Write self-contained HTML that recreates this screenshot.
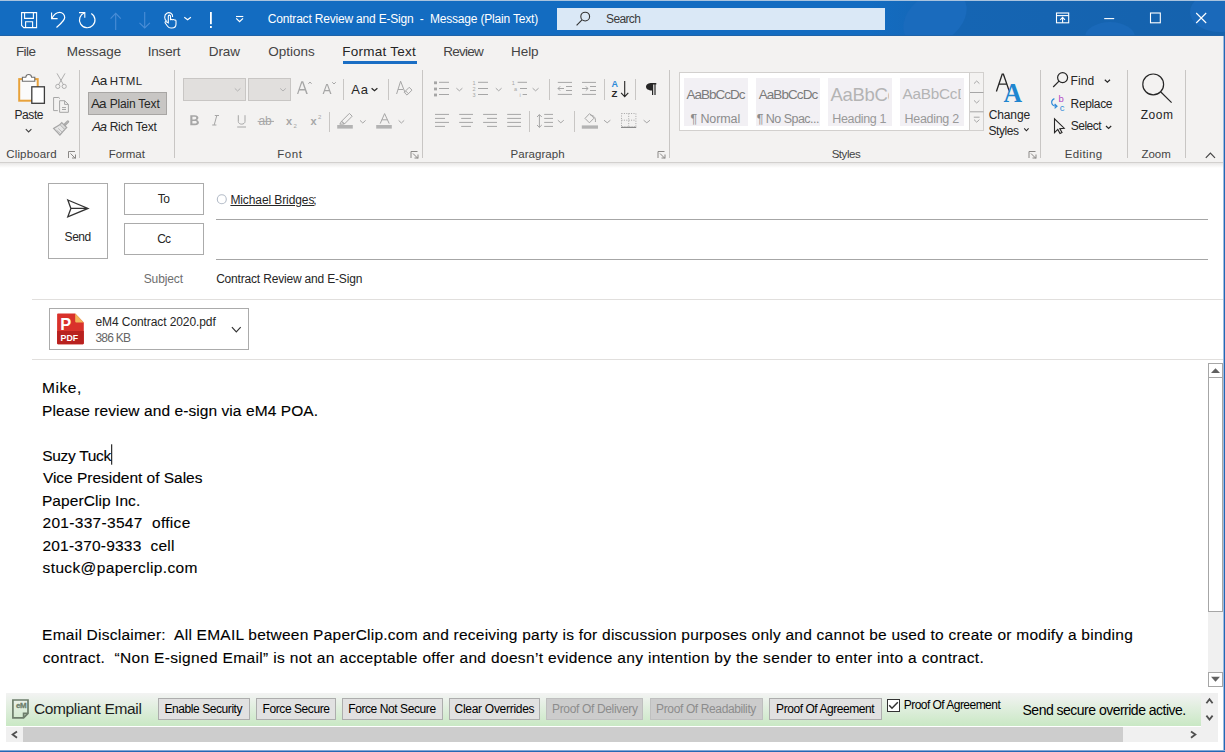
<!DOCTYPE html>
<html><head><meta charset="utf-8"><title>Contract Review and E-Sign - Message (Plain Text)</title>
<style>
html,body{margin:0;padding:0}
body{width:1225px;height:752px;overflow:hidden;position:relative;background:#fff;font-family:"Liberation Sans",sans-serif}
.t{position:absolute;white-space:pre;line-height:normal;font-family:"Liberation Sans",sans-serif}
.b{position:absolute;box-sizing:border-box}
.ic{position:absolute;left:0;top:0}

</style></head><body>
<div class="b" style="left:0;top:0;width:1225px;height:36px;background:linear-gradient(90deg,#136cc1 0px,#136cc1 870px,#1565b3 960px,#1562ad 1225px)"></div>
<div class="b" style="left:905px;top:-10px;width:60px;height:56px;border-radius:50%;background:#1a6bbd;transform:skewX(-20deg)"></div>
<div class="b" style="left:1085px;top:22px;width:50px;height:30px;border-radius:50%;background:#1a69b9"></div>
<div class="b" style="left:1190px;top:-8px;width:60px;height:40px;border-radius:50%;background:#1a69ba"></div>
<div class="b" style="left:0;top:0;width:1225px;height:1px;background:#a9c3de"></div>
<div class="b" style="left:0;top:35px;width:1225px;height:1px;background:#1f63a8"></div>
<div class="b" style="left:557px;top:8px;width:328px;height:22px;background:#dae8f6"></div>
<div class="b" style="left:0;top:36px;width:1225px;height:126px;background:#f3f2f1"></div>
<div class="b" style="left:0;top:162px;width:1225px;height:1px;background:#d2d0ce"></div>
<div class="b" style="left:0;top:163px;width:1225px;height:5px;background:linear-gradient(#e9e8e7,#fff)"></div>
<div class="b" style="left:343px;top:61px;width:74px;height:3px;background:#1a6ec4"></div>
<!-- format plain text highlight -->
<div class="b" style="left:88px;top:92px;width:79px;height:23px;background:#c8c6c4;border:1px solid #a8a6a4"></div>
<!-- font boxes -->
<div class="b" style="left:183px;top:78px;width:63px;height:23px;background:#e1dfdd;border:1px solid #c8c6c4"></div>
<div class="b" style="left:248px;top:78px;width:43px;height:23px;background:#e1dfdd;border:1px solid #c8c6c4"></div>
<!-- styles gallery -->
<div class="b" style="left:679px;top:72px;width:305px;height:59px;background:#fff;border:1px solid #d2d0ce"></div>
<div class="b" style="left:684px;top:78px;width:64px;height:48px;background:#f2f0f4"></div>
<div class="b" style="left:756px;top:78px;width:64px;height:48px;background:#f2f0f4"></div>
<div class="b" style="left:828px;top:78px;width:64px;height:48px;background:#f2f0f4"></div>
<div class="b" style="left:900px;top:78px;width:64px;height:48px;background:#f2f0f4"></div>
<div class="b" style="left:969px;top:72px;width:15px;height:59px;border:1px solid #d2d0ce;background:#f3f2f1"></div>
<!-- compose -->
<div class="b" style="left:48px;top:183px;width:60px;height:76px;border:1px solid #ababab"></div>
<div class="b" style="left:124px;top:183px;width:80px;height:32px;border:1px solid #ababab"></div>
<div class="b" style="left:124px;top:223px;width:80px;height:32px;border:1px solid #ababab"></div>
<div class="b" style="left:216px;top:219px;width:992px;height:1px;background:#a6a6a6"></div>
<div class="b" style="left:216px;top:259px;width:992px;height:1px;background:#a6a6a6"></div>
<div class="b" style="left:32px;top:299px;width:1191px;height:1px;background:#e1dfdd"></div>
<div class="b" style="left:49px;top:308px;width:200px;height:42px;border:1px solid #ababab"></div>
<div class="b" style="left:32px;top:359px;width:1191px;height:1px;background:#e1dfdd"></div>
<!-- window border right -->
<div class="b" style="left:1223px;top:36px;width:1px;height:716px;background:#9dbbe0"></div>
<div class="b" style="left:1224px;top:36px;width:1px;height:716px;background:#2467b4"></div>
<div class="b" style="left:0;top:750px;width:1225px;height:1px;background:#7fa6d6"></div>
<div class="b" style="left:0;top:751px;width:1225px;height:1px;background:#2467b4"></div>
<!-- vertical scrollbar -->
<div class="b" style="left:1208px;top:363px;width:15px;height:324px;background:#f0f0f0"></div>
<div class="b" style="left:1208px;top:363px;width:15px;height:15px;border:1px solid #a6a6a6;background:#fff"></div>
<div class="b" style="left:1208px;top:377px;width:15px;height:235px;border:1px solid #a6a6a6;background:#fff"></div>
<div class="b" style="left:1208px;top:672px;width:15px;height:15px;border:1px solid #a6a6a6;background:#fff"></div>
<!-- status bar -->
<div class="b" style="left:6px;top:693px;width:1195px;height:33px;background:linear-gradient(#f3f3f3,#c9e8c4)"></div>
<div class="b" style="left:1201px;top:693px;width:17px;height:49px;background:#f0f0f0"></div>
<div class="b" style="left:6px;top:727px;width:1212px;height:15px;background:#f0f0f0"></div>
<div class="b" style="left:23px;top:727px;width:1100px;height:15px;background:#cdcdcd"></div>
<!-- buttons -->
<div class="b" style="left:158px;top:698px;width:92px;height:22px;background:#e1e1e1;border:1px solid #adadad"></div>
<div class="b" style="left:256px;top:698px;width:80px;height:22px;background:#e1e1e1;border:1px solid #adadad"></div>
<div class="b" style="left:342px;top:698px;width:101px;height:22px;background:#e1e1e1;border:1px solid #adadad"></div>
<div class="b" style="left:449px;top:698px;width:91px;height:22px;background:#e1e1e1;border:1px solid #adadad"></div>
<div class="b" style="left:546px;top:698px;width:97px;height:22px;background:#cccccc;border:1px solid #bfbfbf"></div>
<div class="b" style="left:650px;top:698px;width:113px;height:22px;background:#cccccc;border:1px solid #bfbfbf"></div>
<div class="b" style="left:769px;top:698px;width:113px;height:22px;background:#e1e1e1;border:1px solid #adadad"></div>
<div class="b" style="left:887px;top:699px;width:13px;height:13px;background:#fff;border:1px solid #333"></div>
<!-- heading previews -->
<div class="b" style="left:828px;top:78px;width:61px;height:30px;overflow:hidden"><div class="t" style="left:2.4px;top:6px;font-size:18.5px;letter-spacing:-0.3px;color:#b4b4b4">AaBbCc</div></div>
<div class="b" style="left:900px;top:78px;width:61px;height:30px;overflow:hidden"><div class="t" style="left:2.4px;top:7px;font-size:15.3px;letter-spacing:-0.2px;color:#b4b4b4">AaBbCcD</div></div>
<!-- font box chevrons -->

<svg class="ic" width="1225" height="752" viewBox="0 0 1225 752">
<g fill="none" stroke="#ffffff" stroke-width="1.1">
<!-- save -->
<path d="M21.6 12.6 H36.6 V27.6 H23.8 L21.6 25.4 Z"/>
<path d="M24.6 12.6 V18.4 H33.4 V12.6"/>
<path d="M25.6 27.6 V21.8 H32.6 V27.6"/>
<!-- undo -->
<path d="M51.6 12.4 V18.6 H57.6"/>
<path d="M51.9 18.2 C54 14.5 57 12.4 59.7 12.4 A5 5 0 0 1 64.7 17.4 C64.7 19.5 63.5 21 56.5 27.5" stroke-width="1.2"/>
<!-- redo -->
<path d="M91.3 13.4 A7.75 7.75 0 1 1 84.6 12.7" stroke-width="1.2"/>
<path d="M79 12.6 H84.8 V17.8"/>
</g>
<g fill="none" stroke="#4a8dd6" stroke-width="1.1">
<path d="M115.7 13.6 V30"/><path d="M110.6 18.6 L115.7 13.4 L120.8 18.6"/>
<path d="M144.7 12 V28"/><path d="M139.5 22.8 L144.7 28 L149.9 22.8"/>
</g>
<g fill="none" stroke="#ffffff" stroke-width="1.1">
<!-- touch hand -->
<path d="M166.5 21 C164.3 19.5 163.8 15 166.8 13.2 C169.8 11.6 173 13.8 172.6 17"/>
<path d="M168.3 22.8 V16.3 C168.3 14.7 170.5 14.7 170.5 16.3 V20.3 C170.5 19 172.6 19 172.6 20.3 C172.6 19.2 174.6 19.3 174.6 20.6 C174.6 19.8 176 20 176 21 V24 C176 26.5 174.5 28 172 28 H171 C169.5 28 168.5 27.5 167.6 26.2 L165.2 23 C164.6 22 165.8 21.2 166.8 22 Z"/>
<path d="M184.3 17.2 L187.6 19.8 L190.9 17.2"/>
<!-- customize -->
<path d="M236 16.5 H243.3"/><path d="M236.2 18.4 L239.6 21.6 L243 18.4" stroke-width="1.3"/>
</g>
<rect x="210" y="12" width="1.8" height="12.2" fill="#fff"/>
<rect x="210" y="26" width="1.8" height="2" fill="#fff"/>
<!-- search icon -->
<g fill="none" stroke="#333" stroke-width="1.1">
<circle cx="585.2" cy="16.6" r="4.4"/>
<path d="M582 19.9 L576.6 25.4"/>
</g>
<!-- window controls -->
<g fill="none" stroke="#fff" stroke-width="1.1">
<rect x="1056.5" y="13" width="12.2" height="9.8"/>
<path d="M1056.5 15.6 H1068.7"/>
<path d="M1062.6 22.8 V17.6 M1060.2 19.8 L1062.6 17.4 L1065 19.8"/>
<path d="M1104.2 18.6 H1114.2"/>
<rect x="1150.5" y="13" width="9.8" height="9.8"/>
<path d="M1196.2 13 L1206.2 23 M1206.2 13 L1196.2 23"/>
</g>
<!-- separators -->
<g fill="#c8c6c4">
<rect x="79" y="70" width="1" height="88"/>
<rect x="174" y="70" width="1" height="88"/>
<rect x="422" y="70" width="1" height="88"/>
<rect x="669" y="70" width="1" height="88"/>
<rect x="1040" y="70" width="1" height="88"/>
<rect x="1127" y="70" width="1" height="88"/>
<rect x="1185" y="70" width="1" height="88"/>
<rect x="343" y="79" width="1" height="21"/>
<rect x="388" y="79" width="1" height="21"/>
<rect x="329" y="112" width="1" height="20"/>
<rect x="549" y="79" width="1" height="21"/>
<rect x="604" y="79" width="1" height="21"/>
<rect x="635" y="79" width="1" height="21"/>
<rect x="529" y="111" width="1" height="21"/>
<rect x="574" y="111" width="1" height="21"/>
</g>
<!-- paste -->
<rect x="19.2" y="79.1" width="18.5" height="21.6" fill="#fbfbfb" stroke="#e8a23a" stroke-width="2"/>
<path d="M22.4 81.2 V77.2 H25.8 C26.2 73.6 31.2 73.6 31.6 77.2 H34.8 V81.2 Z" fill="#fff" stroke="#6e6e6e" stroke-width="1.1"/>
<rect x="31.8" y="86.8" width="12.6" height="16.5" fill="#fff" stroke="#3c3c3c" stroke-width="1.3"/>
<path d="M25.8 129.2 L28.6 132 L31.4 129.2" fill="none" stroke="#444" stroke-width="1.1"/>
<!-- cut/copy/painter (disabled) -->
<g fill="none" stroke="#a6a6a6" stroke-width="1">
<path d="M57 73.4 L63.4 84.6 M65 73.4 L58.6 84.6" stroke-width="0.9"/>
<circle cx="57.8" cy="86.4" r="2.1" stroke-width="0.9"/><circle cx="64.2" cy="86.4" r="2.1" stroke-width="0.9"/>
<path d="M57.8 110.6 H53.6 V97.5 H58.8 L60 98.7"/>
<path d="M59.6 100.7 H64.6 L68.4 104.4 V112.3 H59.6 Z M64.6 100.7 V104.4 H68.4"/>
<path d="M62 107.6 H66 M62 109.5 H66"/>
<path d="M63.8 124.7 L67.4 121.1 C68 120.5 69 121.5 68.4 122.1 L64.8 125.7" stroke-width="1.3"/>
<path d="M61.8 122.7 L66.7 127.6 L64.6 129.7 L59.7 124.8 Z" fill="#dcdcdc" stroke-width="1.2"/>
<path d="M59.7 124.8 L53.6 128.4 L59.9 135.2 L64.6 129.7" fill="#e6e6e6" stroke-width="1.2"/>
<path d="M56.6 130.2 L60.6 133.6 M58.2 128.4 L62.4 132.4" stroke-width="0.7"/>
</g>
<!-- font group -->
<g fill="#a6a6a6">
<path d="M297 94 L301.3 81.2 H303.2 L307.8 94 H306.2 L305 90.4 H299.4 L298.3 94 Z M299.9 89 H304.5 L302.2 82.6 Z"/>
<path d="M322.6 94 L326.2 84 H327.8 L331.5 94 H330.1 L329.2 91.3 H324.8 L323.9 94 Z M325.2 90 H328.8 L327 84.9 Z"/>
</g>
<g fill="none" stroke="#a6a6a6" stroke-width="1">
<path d="M308.4 83.8 L310 82 L311.6 83.8"/>
<path d="M332.2 82.2 L334 84 L335.8 82.2"/>
</g>
<path d="M371.6 88.2 L374.5 90.8 L377.4 88.2" fill="none" stroke="#262626" stroke-width="1.2"/>
<g fill="none" stroke="#a6a6a6" stroke-width="1">
<path d="M396.6 94 L400.6 81.2 L405 92.5"/>
<path d="M398 89.5 H403"/>
<path d="M404.2 92.3 L409.2 87.3 L412 90.1 L407 95.1 Z M405.6 90.9 L408.4 93.7"/>
</g>
<!-- B I U ab x2 x2 -->
<g fill="#a6a6a6">
<path d="M190.3 115.2 H194.6 C197.6 115.2 198.4 116.8 198.4 117.8 C198.4 119 197.6 119.8 196.6 120.1 C198 120.4 198.9 121.4 198.9 122.6 C198.9 124 198 125.2 195 125.2 H190.3 Z M192.4 116.8 V119.4 H194.4 C195.6 119.4 196.3 118.9 196.3 118.1 C196.3 117.3 195.7 116.8 194.4 116.8 Z M192.4 121 V123.6 H194.8 C196.1 123.6 196.8 123.1 196.8 122.3 C196.8 121.5 196.1 121 194.8 121 Z"/>
</g>
<g fill="none" stroke="#a6a6a6" stroke-width="1">
<path d="M216.8 115.5 L214.2 125 M214.8 115.5 H219 M212.2 125 H216.4"/>
<path d="M238.3 115.2 V121.5 C238.3 125 245 125 245 121.5 V115.2"/>
<path d="M237.2 127 H246"/>
<path d="M257.6 121.4 H274"/>
</g>
<text x="258.6" y="125" font-family="Liberation Sans" font-size="12" fill="#a6a6a6" letter-spacing="-0.3">ab</text>
<text x="286" y="125" font-family="Liberation Sans" font-size="11" font-weight="bold" fill="#a6a6a6">x</text>
<text x="293.6" y="127.6" font-family="Liberation Sans" font-size="6" fill="#a6a6a6">2</text>
<text x="310.6" y="125" font-family="Liberation Sans" font-size="11" font-weight="bold" fill="#a6a6a6">x</text>
<text x="318" y="118.6" font-family="Liberation Sans" font-size="6" fill="#a6a6a6">2</text>
<!-- highlighter / font color -->
<g fill="none" stroke="#a6a6a6" stroke-width="1">
<path d="M341.6 121.2 L349.4 113.4 L352.2 116.2 L344.4 124 Z M339.8 124.2 L341.6 121.2 L344.4 124 Z"/>
<path d="M360 120.4 L362.8 123 L365.6 120.4"/>
<path d="M380.2 123.6 L384.6 113.6 L389.2 123.6 M381.8 119.8 H387.4"/>
<path d="M398.6 120.4 L401.4 123 L404.2 120.4"/>
</g>
<rect x="337.2" y="125" width="15.6" height="3.6" fill="#b3b3b3"/>
<rect x="376.2" y="125" width="15.6" height="3.6" fill="#b3b3b3"/>
<g fill="none" stroke="#b3b3b3" stroke-width="1">
<path d="M234.8 88.4 L237.6 91 L240.4 88.4"/>
<path d="M280.2 88.4 L283 91 L285.8 88.4"/>
</g>
<!-- paragraph icons -->
<g fill="#a6a6a6">
<rect x="434" y="81.4" width="3" height="2.8"/><rect x="434" y="87.6" width="3" height="2.8"/><rect x="434" y="93.6" width="3" height="2.8"/>
<rect x="439" y="81.8" width="10" height="1"/><rect x="439" y="88" width="10" height="1"/><rect x="439" y="94" width="10" height="1"/>
<rect x="478" y="81.8" width="10" height="1"/><rect x="478" y="88" width="10" height="1"/><rect x="478" y="94" width="10" height="1"/>
<rect x="517.6" y="81.8" width="9.4" height="1"/><rect x="520" y="88" width="7" height="1"/><rect x="522.6" y="94" width="4.4" height="1"/>
</g>
<g font-family="Liberation Sans" font-size="5.5" fill="#a6a6a6">
<text x="472.6" y="85">1</text><text x="472.4" y="91.2">2</text><text x="472.4" y="97.2">3</text>
<text x="511.8" y="85">1</text><text x="514" y="91.2">a</text><text x="519.4" y="97.2">i</text>
</g>
<g fill="none" stroke="#a6a6a6" stroke-width="1">
<path d="M456.4 88.2 L459.4 90.8 L462.4 88.2"/>
<path d="M495.8 88.2 L498.7 90.8 L501.6 88.2"/>
<path d="M532.6 88.2 L535.6 90.8 L538.6 88.2"/>
<!-- indent -->
<path d="M557.8 82.4 H572 M566 86.5 H572 M566 90.5 H572 M557.8 94.4 H572"/>
<path d="M558 88.5 H564 M560.2 86.3 L558 88.5 L560.2 90.7"/>
<path d="M582 82.4 H596 M590 86.5 H596 M590 90.5 H596 M582 94.4 H596"/>
<path d="M582 88.5 H588 M585.8 86.3 L588 88.5 L585.8 90.7"/>
<!-- align -->
<path d="M435 114.4 H449 M435 118.4 H445 M435 122.4 H449 M435 126.4 H445"/>
<path d="M459.2 114.4 H473 M461.2 118.4 H471 M459.2 122.4 H473 M461.2 126.4 H471"/>
<path d="M483.1 114.4 H497 M487 118.4 H497 M483.1 122.4 H497 M487 126.4 H497"/>
<path d="M507.2 114.4 H521 M507.2 118.4 H521 M507.2 122.4 H521 M507.2 126.4 H521"/>
<!-- line spacing -->
<path d="M539.4 114.6 V127.4 M537 117 L539.4 114.6 L541.8 117 M537 125 L539.4 127.4 L541.8 125"/>
<path d="M544.2 114.4 H553 M544.2 118.4 H553 M544.2 122.4 H553 M544.2 126.4 H553"/>
<path d="M557.8 120.2 L560.8 122.8 L563.8 120.2"/>
<!-- shading -->
<path d="M589.6 113.6 L585 118.4 L589.4 122.8 L594 118.2 Z M590.2 115 C593 115 596 117 595.4 122"/>
<path d="M604 120.2 L607.2 122.8 L610.4 120.2"/>
<path d="M643.6 120.2 L646.8 122.8 L650 120.2"/>
</g>
<rect x="581.8" y="125.4" width="16.2" height="3.3" fill="#b3b3b3"/>
<!-- borders -->
<g fill="none" stroke="#a6a6a6" stroke-width="1" stroke-dasharray="1 1.4">
<rect x="621.5" y="113.5" width="14.4" height="13.5"/>
<path d="M628.7 113.5 V127 M621.5 120.2 H635.9"/>
</g>
<rect x="621" y="126.8" width="15.2" height="1.2" fill="#8a8a8a"/>
<!-- sort -->
<text x="611.4" y="87.3" font-family="Liberation Sans" font-size="9" font-weight="bold" fill="#2e8ad8">A</text>
<text x="611.6" y="96.8" font-family="Liberation Sans" font-size="9.6" font-weight="bold" fill="#262626">Z</text>
<path d="M624.7 81 V96.6 M621.1 92.8 L624.7 96.6 L628.3 92.8" fill="none" stroke="#262626" stroke-width="1.1"/>
<path d="M652 83 H656.3 V84.5 H655.6 V95.1 H654.4 V84.5 H653.2 V95.1 H652 V90.4 C648.4 90.4 646 88.9 646 86.7 C646 84.5 648.4 83 652 83 Z" fill="#262626"/>
<!-- dialog launchers -->
<g fill="none" stroke="#8a8886" stroke-width="1">
<path d="M68.5 158 V151.5 H75 M70.5 153.5 L75.5 158.5 M72 158 H75.5 V154.5"/>
<path d="M411 158 V151.5 H417.5 M413 153.5 L418 158.5 M414.5 158 H418 V154.5"/>
<path d="M658 158 V151.5 H664.5 M660 153.5 L665 158.5 M661.5 158 H665 V154.5"/>
<path d="M1029 158 V151.5 H1035.5 M1031 153.5 L1036 158.5 M1032.5 158 H1036 V154.5"/>
</g>
<!-- styles scroll -->
<g fill="none" stroke="#a6a6a6" stroke-width="1">
<path d="M970 92.5 H983.5 M970 111.8 H983.5"/>
<path d="M974 83.6 L976.7 81 L979.4 83.6"/>
<path d="M974 100.4 L976.7 103 L979.4 100.4"/>
<path d="M973.8 117.2 H979.6 M974 119.6 L976.7 122.2 L979.4 119.6"/>
</g>
<!-- change styles -->
<path d="M996.4 91.5 L1002.2 74.2 H1003.4 L1009.4 91.5 M999 84.2 H1006.6" fill="none" stroke="#262626" stroke-width="1.3"/>
<text x="1003.6" y="101.8" font-family="Liberation Serif" font-size="28" font-weight="bold" fill="#1f86d0" transform="translate(1004 101.8) scale(0.92 1) translate(-1004 -101.8)">A</text>
<path d="M1024.2 128.4 L1026.4 130.8 L1028.6 128.4" fill="none" stroke="#262626" stroke-width="1.1"/>
<!-- editing -->
<g fill="none" stroke="#262626" stroke-width="1.2">
<circle cx="1062.6" cy="77.6" r="5"/>
<path d="M1059 81.2 L1053.2 87"/>
<path d="M1104.8 79.8 L1107.4 82.2 L1110 79.8"/>
<path d="M1106 126 L1108.6 128.4 L1111.2 126"/>
<path d="M1054.5 118.8 V132.6 L1057.8 129.4 L1060 133.6 L1062 132.6 L1059.8 128.6 L1064.2 128.2 Z" stroke-width="1.1"/>
<circle cx="1153.2" cy="84.4" r="10.4"/>
<path d="M1160.6 91.8 L1171.6 102.6"/>
</g>
<text x="1058.6" y="102.4" font-family="Liberation Sans" font-size="9.5" fill="#b146c2">b</text>
<text x="1059.8" y="111" font-family="Liberation Sans" font-size="9.5" fill="#2e8ad8">c</text>
<path d="M1054.4 98.6 C1050.2 100.5 1050.8 106.4 1056.8 106.2 M1054.6 104 L1057 106.2 L1054.6 108.4" fill="none" stroke="#2e8ad8" stroke-width="1.2"/>
<!-- collapse ribbon -->
<path d="M1205.8 157.8 L1210.4 153.2 L1215 157.8" fill="none" stroke="#444" stroke-width="1.2"/>
<!-- send -->
<path d="M67.8 200 L88 208.4 L67.8 216.8 L70.9 208.4 Z M70.9 208.4 H88" fill="none" stroke="#333" stroke-width="1.3" stroke-linejoin="miter"/>
<!-- radio -->
<circle cx="221.8" cy="199.3" r="4.5" fill="#fff" stroke="#b4bcc8" stroke-width="1.1"/>
<!-- pdf -->
<path d="M58.2 313.5 H75.2 L83.8 322.6 V343 C83.8 343.8 83.2 344.3 82.4 344.3 H58.5 C57.7 344.3 57.1 343.8 57.1 343 V314.6 C57.1 314 57.6 313.5 58.2 313.5 Z" fill="#d9312b"/>
<path d="M57.1 331 H83.8 V343 C83.8 343.8 83.2 344.3 82.4 344.3 H58.5 C57.7 344.3 57.1 343.8 57.1 343 Z" fill="#b8211f"/>
<path d="M75.2 313.5 L83.8 322.6 H76.6 C75.8 322.6 75.2 322 75.2 321.2 Z" fill="#f2b45a"/>
<text x="60.2" y="329.5" font-family="Liberation Sans" font-weight="bold" font-size="16.4" fill="#fff">P</text>
<text x="60.6" y="341.3" font-family="Liberation Sans" font-weight="bold" font-size="8.8" fill="#fff" letter-spacing="0">PDF</text>
<!-- attachment chevron -->
<path d="M231.9 327.2 L236.3 331.8 L240.7 327.2" fill="none" stroke="#333" stroke-width="1.2"/>
<!-- cursor -->
<rect x="111.2" y="444.3" width="1" height="20.4" fill="#000"/>
<!-- vertical scrollbar arrows -->
<path d="M1211 373 L1215.5 368.2 L1220 373 Z" fill="#606060"/>
<path d="M1211 676.8 L1215.5 681.8 L1220 676.8 Z" fill="#606060"/>
<!-- eM icon -->
<path d="M12.9 700 H28 V713.4 L23.6 717.8 H12.9 Z M28 713.4 H23.6 V717.8" fill="none" stroke="#6e7e6c" stroke-width="1.7"/>
<text x="16" y="708.4" font-family="Liberation Sans" font-weight="bold" font-size="8" fill="#6e7e6c" stroke="#6e7e6c" stroke-width="0.3" letter-spacing="-0.5">eM</text>
<!-- checkbox tick -->
<path d="M889.2 705.2 L892 708.2 L897.8 702.2" fill="none" stroke="#333" stroke-width="1.5"/>
<!-- status right arrows -->
<g fill="none" stroke="#505050" stroke-width="1.8">
<path d="M1206.4 703.2 L1209.5 699.2 L1212.6 703.2"/>
<path d="M1206.4 715.6 L1209.5 719.6 L1212.6 715.6"/>
<path d="M17 731.4 L12.6 734.6 L17 737.8"/>
<path d="M1191 731.4 L1195.4 734.6 L1191 737.8"/>
</g>

</svg>
<div class="t" style="left:267.74px;top:12px;font-size:12px;letter-spacing:-0.19px;color:#ffffff;">Contract Review and E-Sign  -  Message (Plain Text)</div>
<div class="t" style="left:606.1px;top:12px;font-size:12px;letter-spacing:-0.661px;color:#3b3b3b;">Search</div>
<div class="t" style="left:15.89px;top:44px;font-size:13.5px;letter-spacing:-0.551px;color:#444444;">File</div>
<div class="t" style="left:66.79px;top:44px;font-size:13.5px;letter-spacing:-0.065px;color:#444444;">Message</div>
<div class="t" style="left:147.68px;top:44px;font-size:13.5px;letter-spacing:-0.168px;color:#444444;">Insert</div>
<div class="t" style="left:208.79px;top:44px;font-size:13.5px;letter-spacing:-0.105px;color:#444444;">Draw</div>
<div class="t" style="left:268.32px;top:44px;font-size:13.5px;letter-spacing:-0.031px;color:#444444;">Options</div>
<div class="t" style="left:342.29px;top:44px;font-size:13.5px;letter-spacing:0.251px;color:#262626;">Format Text</div>
<div class="t" style="left:443.19px;top:44px;font-size:13.5px;letter-spacing:-0.738px;color:#444444;">Review</div>
<div class="t" style="left:511.09px;top:44px;font-size:13.5px;letter-spacing:-0.072px;color:#444444;">Help</div>
<div class="t" style="left:6.27px;top:148px;font-size:11.5px;letter-spacing:0.138px;color:#444444;">Clipboard</div>
<div class="t" style="left:108.65px;top:148px;font-size:11.5px;letter-spacing:-0.028px;color:#444444;">Format</div>
<div class="t" style="left:277.15px;top:148px;font-size:11.5px;letter-spacing:0.63px;color:#444444;">Font</div>
<div class="t" style="left:510.45px;top:148px;font-size:11.5px;letter-spacing:0.066px;color:#444444;">Paragraph</div>
<div class="t" style="left:831.66px;top:148px;font-size:11.5px;letter-spacing:-0.456px;color:#444444;">Styles</div>
<div class="t" style="left:1064.85px;top:148px;font-size:11.5px;letter-spacing:0.341px;color:#444444;">Editing</div>
<div class="t" style="left:1141.56px;top:148px;font-size:11.5px;letter-spacing:-0.074px;color:#444444;">Zoom</div>
<div class="t" style="left:14.51px;top:108px;font-size:12px;letter-spacing:-0.416px;color:#262626;">Paste</div>
<div class="t" style="left:91.28px;top:73px;font-size:13.5px;letter-spacing:-0.605px;color:#262626;">Aa</div>
<div class="t" style="left:109.75px;top:75px;font-size:11.5px;letter-spacing:0.393px;color:#262626;">HTML</div>
<div class="t" style="left:90.88px;top:96px;font-size:13.5px;letter-spacing:-0.894px;color:#262626;">Aa</div>
<div class="t" style="left:109.71px;top:97px;font-size:12px;letter-spacing:-0.2px;color:#262626;">Plain Text</div>
<div class="t" style="left:109.71px;top:120px;font-size:12px;letter-spacing:-0.255px;color:#262626;">Rich Text</div>
<div class="t" style="left:92.34px;top:119px;font-size:13px;letter-spacing:-1.145px;color:#262626;font-style:italic;">Aa</div>
<div class="t" style="left:351.17px;top:82px;font-size:13px;letter-spacing:0.922px;color:#262626;">Aa</div>
<div class="t" style="left:686.48px;top:87px;font-size:13.5px;letter-spacing:-0.995px;color:#7a7a7a;">AaBbCcDc</div>
<div class="t" style="left:690.43px;top:112px;font-size:12.5px;letter-spacing:-0.091px;color:#8c8c8c;">¶ Normal</div>
<div class="t" style="left:758.68px;top:87px;font-size:13.5px;letter-spacing:-0.922px;color:#7a7a7a;">AaBbCcDc</div>
<div class="t" style="left:756.73px;top:112px;font-size:12.5px;letter-spacing:-0.534px;color:#8c8c8c;">¶ No Spac...</div>
<div class="t" style="left:832.29px;top:112px;font-size:12.5px;letter-spacing:-0.34px;color:#999999;">Heading 1</div>
<div class="t" style="left:904.49px;top:112px;font-size:12.5px;letter-spacing:-0.287px;color:#999999;">Heading 2</div>
<div class="t" style="left:988.74px;top:108px;font-size:12px;letter-spacing:-0.129px;color:#262626;">Change</div>
<div class="t" style="left:988.6px;top:124px;font-size:12px;letter-spacing:-0.476px;color:#262626;">Styles</div>
<div class="t" style="left:1070.61px;top:74px;font-size:12px;letter-spacing:0.102px;color:#262626;">Find</div>
<div class="t" style="left:1070.61px;top:97px;font-size:12px;letter-spacing:-0.359px;color:#262626;">Replace</div>
<div class="t" style="left:1070.7px;top:119px;font-size:12px;letter-spacing:-0.486px;color:#262626;">Select</div>
<div class="t" style="left:1140.78px;top:108px;font-size:12px;letter-spacing:0.512px;color:#262626;">Zoom</div>
<div class="t" style="left:64.6px;top:230px;font-size:12px;letter-spacing:-0.451px;color:#262626;">Send</div>
<div class="t" style="left:157.67px;top:192px;font-size:12px;letter-spacing:-0.411px;color:#262626;">To</div>
<div class="t" style="left:157.34px;top:232px;font-size:12px;letter-spacing:-1.038px;color:#262626;">Cc</div>
<div class="t" style="left:143.7px;top:272px;font-size:12px;letter-spacing:-0.104px;color:#6e6e6e;">Subject</div>
<div class="t" style="left:230.41px;top:193px;font-size:12px;letter-spacing:-0.098px;color:#262626;text-decoration:underline;">Michael Bridges</div>
<div class="t" style="left:313.25px;top:193px;font-size:12px;letter-spacing:0.0px;color:#262626;">;</div>
<div class="t" style="left:216.14px;top:272px;font-size:12px;letter-spacing:-0.182px;color:#262626;">Contract Review and E-Sign</div>
<div class="t" style="left:95.52px;top:315px;font-size:12px;letter-spacing:-0.092px;color:#262626;">eM4 Contract 2020.pdf</div>
<div class="t" style="left:95.41px;top:331px;font-size:12px;letter-spacing:-0.748px;color:#666666;">386 KB</div>
<div class="t" style="left:41.91px;top:379px;font-size:15.5px;letter-spacing:0.562px;color:#000000;-webkit-text-stroke:0.12px #000;">Mike,</div>
<div class="t" style="left:42.11px;top:402px;font-size:15.5px;letter-spacing:0.077px;color:#000000;-webkit-text-stroke:0.12px #000;">Please review and e-sign via eM4 POA.</div>
<div class="t" style="left:42.34px;top:447px;font-size:15.5px;letter-spacing:-0.334px;color:#000000;-webkit-text-stroke:0.12px #000;">Suzy Tuck</div>
<div class="t" style="left:42.89px;top:469px;font-size:15.5px;letter-spacing:-0.017px;color:#000000;-webkit-text-stroke:0.12px #000;">Vice President of Sales</div>
<div class="t" style="left:41.91px;top:492px;font-size:15.5px;letter-spacing:0.075px;color:#000000;-webkit-text-stroke:0.12px #000;">PaperClip Inc.</div>
<div class="t" style="left:42.47px;top:514px;font-size:15.5px;letter-spacing:0.312px;color:#000000;-webkit-text-stroke:0.12px #000;">201-337-3547  office</div>
<div class="t" style="left:42.47px;top:537px;font-size:15.5px;letter-spacing:0.206px;color:#000000;-webkit-text-stroke:0.12px #000;">201-370-9333  cell</div>
<div class="t" style="left:42.61px;top:559px;font-size:15.5px;letter-spacing:0.36px;color:#000000;-webkit-text-stroke:0.12px #000;">stuck@paperclip.com</div>
<div class="t" style="left:42.11px;top:626px;font-size:15.5px;letter-spacing:0.239px;color:#000000;-webkit-text-stroke:0.12px #000;">Email Disclaimer:  All EMAIL between PaperClip.com and receiving party is for discussion purposes only and cannot be used to create or modify a binding</div>
<div class="t" style="left:42.76px;top:649px;font-size:15.5px;letter-spacing:0.336px;color:#000000;-webkit-text-stroke:0.12px #000;">contract.  “Non E-signed Email” is not an acceptable offer and doesn’t evidence any intention by the sender to enter into a contract.</div>
<div class="t" style="left:33.91px;top:700px;font-size:15.5px;letter-spacing:-0.348px;color:#1e1e1e;">Compliant Email</div>
<div class="t" style="left:164.41px;top:702px;font-size:12px;letter-spacing:-0.423px;color:#000000;">Enable Security</div>
<div class="t" style="left:262.61px;top:702px;font-size:12px;letter-spacing:-0.433px;color:#000000;">Force Secure</div>
<div class="t" style="left:348.31px;top:702px;font-size:12px;letter-spacing:-0.419px;color:#000000;">Force Not Secure</div>
<div class="t" style="left:454.54px;top:702px;font-size:12px;letter-spacing:-0.285px;color:#000000;">Clear Overrides</div>
<div class="t" style="left:552.01px;top:702px;font-size:12px;letter-spacing:-0.341px;color:#8d8d8d;">Proof Of Delivery</div>
<div class="t" style="left:656.11px;top:702px;font-size:12px;letter-spacing:-0.375px;color:#8d8d8d;">Proof Of Readability</div>
<div class="t" style="left:776.11px;top:702px;font-size:12px;letter-spacing:-0.453px;color:#000000;">Proof Of Agreement</div>
<div class="t" style="left:903.71px;top:698px;font-size:12px;letter-spacing:-0.532px;color:#000000;">Proof Of Agreement</div>
<div class="t" style="left:1022.54px;top:702px;font-size:14px;letter-spacing:-0.51px;color:#000000;">Send secure override active.</div>
</body></html>
